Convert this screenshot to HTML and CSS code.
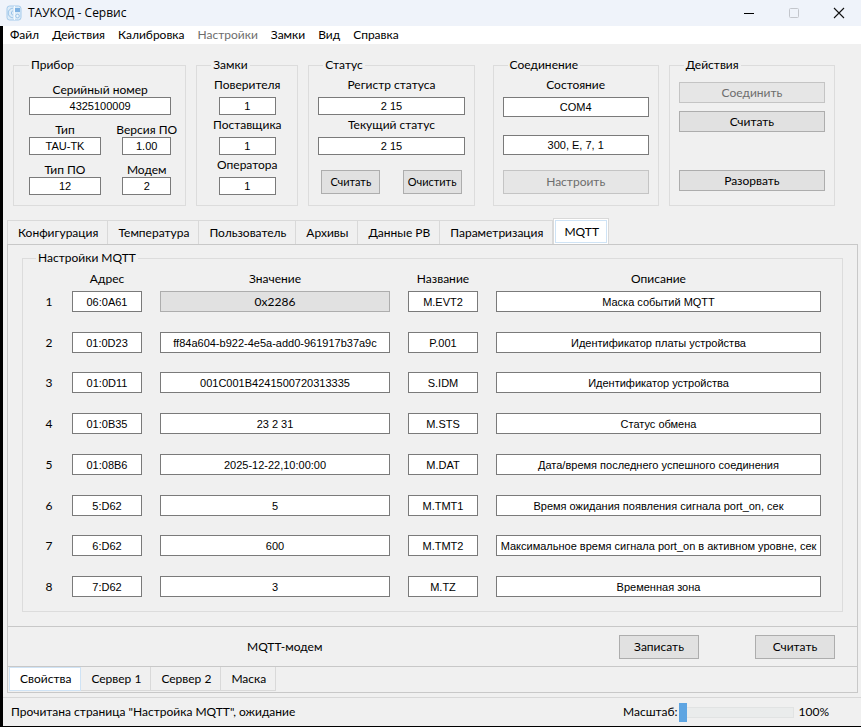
FILE: index.html
```html
<!DOCTYPE html>
<html lang="ru">
<head>
    <meta charset="UTF-8">
    <meta name="viewport" content="width=device-width, initial-scale=1.0">
    <title>ТАУКОД - Сервис</title>
    <link rel="stylesheet" href="styles.css">
</head>
<body>

<div class="window">
    <header class="titlebar">
        <svg class="app-icon" width="16" height="16" viewBox="0 0 16 16">
            <rect x="1" y="1" width="14" height="14" rx="2.5" fill="#dcebf8" stroke="#a6cbec"/>
            <path d="M7 3.2A4.8 4.8 0 0 0 7 12.8M7 5.8A2.3 2.3 0 0 0 7 10.2" fill="none" stroke="#9cc4e8"/>
            <path d="M8.5 1v14" stroke="#f4f9fd"/>
            <rect x="9" y="3" width="5" height="4" fill="#7fb2e2"/>
            <circle cx="11.5" cy="11" r="1.8" fill="#eef6fc" stroke="#9cc4e8"/>
        </svg>
        <span class="title">ТАУКОД - Сервис</span>
        <div class="window-buttons">
            <button aria-label="Свернуть"><svg width="12" height="12" viewBox="0 0 12 12"><path d="M1 6.5h10" stroke="#000"/></svg></button>
            <button aria-label="Развернуть" disabled><svg width="12" height="12" viewBox="0 0 12 12"><rect x="1.5" y="1.5" width="9" height="9" rx="1" fill="none" stroke="#c3c6cc"/></svg></button>
            <button aria-label="Закрыть"><svg width="12" height="12" viewBox="0 0 12 12"><path d="M1 1l10 10M11 1L1 11" stroke="#111" stroke-width="1.1"/></svg></button>
        </div>
    </header>

    <div class="client">
        <nav class="menu">
            <button>Файл</button>
            <button>Действия</button>
            <button>Калибровка</button>
            <button disabled>Настройки</button>
            <button>Замки</button>
            <button>Вид</button>
            <button>Справка</button>
        </nav>

        <section class="panels">
            <fieldset class="group device">
                <legend>Прибор</legend>
                <div class="field">
                    <label for="serial">Серийный номер</label>
                    <input id="serial" type="text" value="4325100009" readonly>
                </div>
                <div class="field-row">
                    <div class="field type">
                        <label for="type">Тип</label>
                        <input id="type" type="text" value="TAU-TK" readonly>
                    </div>
                    <div class="field short">
                        <label for="version">Версия ПО</label>
                        <input id="version" type="text" value="1.00" readonly>
                    </div>
                </div>
                <div class="field-row">
                    <div class="field type">
                        <label for="softType">Тип ПО</label>
                        <input id="softType" type="text" value="12" readonly>
                    </div>
                    <div class="field short">
                        <label for="modem">Модем</label>
                        <input id="modem" type="text" value="2" readonly>
                    </div>
                </div>
            </fieldset>

            <fieldset class="group locks">
                <legend>Замки</legend>
                <div class="field">
                    <label for="verifier">Поверителя</label>
                    <input id="verifier" type="text" value="1" readonly>
                </div>
                <div class="field">
                    <label for="supplier">Поставщика</label>
                    <input id="supplier" type="text" value="1" readonly>
                </div>
                <div class="field">
                    <label for="operator">Оператора</label>
                    <input id="operator" type="text" value="1" readonly>
                </div>
            </fieldset>

            <fieldset class="group status">
                <legend>Статус</legend>
                <div class="field">
                    <label for="statusReg">Регистр статуса</label>
                    <input id="statusReg" type="text" value="2 15" readonly>
                </div>
                <div class="field">
                    <label for="statusNow">Текущий статус</label>
                    <input id="statusNow" type="text" value="2 15" readonly>
                </div>
                <div class="button-row">
                    <button class="btn small">Считать</button>
                    <button class="btn small">Очистить</button>
                </div>
            </fieldset>

            <fieldset class="group connection">
                <legend>Соединение</legend>
                <div class="field">
                    <label for="port">Состояние</label>
                    <input id="port" type="text" value="COM4" readonly>
                </div>
                <input class="port-params" type="text" value="300, E, 7, 1" aria-label="Параметры порта" readonly>
                <button class="btn" disabled>Настроить</button>
            </fieldset>

            <fieldset class="group actions">
                <legend>Действия</legend>
                <button class="btn" disabled>Соединить</button>
                <button class="btn">Считать</button>
                <button class="btn disconnect">Разорвать</button>
            </fieldset>
        </section>

        <div class="tabs">
            <button class="tab">Конфигурация</button>
            <button class="tab">Температура</button>
            <button class="tab">Пользователь</button>
            <button class="tab">Архивы</button>
            <button class="tab">Данные РВ</button>
            <button class="tab">Параметризация</button>
            <button class="tab active">MQTT</button>
        </div>

        <main class="page">
            <fieldset class="group mqtt">
                <legend>Настройки MQTT</legend>
                <table class="params">
                    <colgroup>
                        <col class="col-num">
                        <col class="col-short">
                        <col class="col-value">
                        <col class="col-short">
                        <col>
                    </colgroup>
                    <thead>
                        <tr><th></th><th>Адрес</th><th>Значение</th><th>Название</th><th>Описание</th></tr>
                    </thead>
                    <tbody>
                        <tr>
                            <td>1</td>
                            <td><input type="text" value="06:0A61" aria-label="Адрес 1" readonly></td>
                            <td><button class="btn">0x2286</button></td>
                            <td><input type="text" value="M.EVT2" aria-label="Название 1" readonly></td>
                            <td><input type="text" value="Маска событий MQTT" aria-label="Описание 1" readonly></td>
                        </tr>
                        <tr>
                            <td>2</td>
                            <td><input type="text" value="01:0D23" aria-label="Адрес 2" readonly></td>
                            <td><input type="text" value="ff84a604-b922-4e5a-add0-961917b37a9c" aria-label="Значение 2"></td>
                            <td><input type="text" value="P.001" aria-label="Название 2" readonly></td>
                            <td><input type="text" value="Идентификатор платы устройства" aria-label="Описание 2" readonly></td>
                        </tr>
                        <tr>
                            <td>3</td>
                            <td><input type="text" value="01:0D11" aria-label="Адрес 3" readonly></td>
                            <td><input type="text" value="001C001B4241500720313335" aria-label="Значение 3"></td>
                            <td><input type="text" value="S.IDM" aria-label="Название 3" readonly></td>
                            <td><input type="text" value="Идентификатор устройства" aria-label="Описание 3" readonly></td>
                        </tr>
                        <tr>
                            <td>4</td>
                            <td><input type="text" value="01:0B35" aria-label="Адрес 4" readonly></td>
                            <td><input type="text" value="23 2 31" aria-label="Значение 4"></td>
                            <td><input type="text" value="M.STS" aria-label="Название 4" readonly></td>
                            <td><input type="text" value="Статус обмена" aria-label="Описание 4" readonly></td>
                        </tr>
                        <tr>
                            <td>5</td>
                            <td><input type="text" value="01:08B6" aria-label="Адрес 5" readonly></td>
                            <td><input type="text" value="2025-12-22,10:00:00" aria-label="Значение 5"></td>
                            <td><input type="text" value="M.DAT" aria-label="Название 5" readonly></td>
                            <td><input type="text" value="Дата/время последнего успешного соединения" aria-label="Описание 5" readonly></td>
                        </tr>
                        <tr>
                            <td>6</td>
                            <td><input type="text" value="5:D62" aria-label="Адрес 6" readonly></td>
                            <td><input type="text" value="5" aria-label="Значение 6"></td>
                            <td><input type="text" value="M.TMT1" aria-label="Название 6" readonly></td>
                            <td><input type="text" value="Время ожидания появления сигнала port_on, сек" aria-label="Описание 6" readonly></td>
                        </tr>
                        <tr>
                            <td>7</td>
                            <td><input type="text" value="6:D62" aria-label="Адрес 7" readonly></td>
                            <td><input type="text" value="600" aria-label="Значение 7"></td>
                            <td><input type="text" value="M.TMT2" aria-label="Название 7" readonly></td>
                            <td><input type="text" value="Максимальное время сигнала port_on в активном уровне, сек" aria-label="Описание 7" readonly></td>
                        </tr>
                        <tr>
                            <td>8</td>
                            <td><input type="text" value="7:D62" aria-label="Адрес 8" readonly></td>
                            <td><input type="text" value="3" aria-label="Значение 8"></td>
                            <td><input type="text" value="M.TZ" aria-label="Название 8" readonly></td>
                            <td><input type="text" value="Временная зона" aria-label="Описание 8" readonly></td>
                        </tr>
                    </tbody>
                </table>
            </fieldset>

            <div class="page-footer">
                <span class="page-name">MQTT-модем</span>
                <div class="page-buttons">
                    <button class="btn">Записать</button>
                    <button class="btn">Считать</button>
                </div>
            </div>

            <div class="subtabs">
                <button class="tab active">Свойства</button>
                <button class="tab">Сервер 1</button>
                <button class="tab">Сервер 2</button>
                <button class="tab">Маска</button>
            </div>
        </main>

        <footer class="statusbar">
            <span>Прочитана страница "Настройка MQTT", ожидание</span>
            <div class="scale">
                <label for="scale">Масштаб:</label>
                <input id="scale" type="range" min="100" max="200" value="100">
                <span>100%</span>
            </div>
        </footer>
    </div>
</div>

</body>
</html>
```
FILE: styles.css
```css
* {
    box-sizing: border-box;
}

body {
    margin: 0;
    background-color: #f0f0f0;
    font-family: Lato, "Noto Sans", sans-serif;
    font-size: 12px;
    line-height: 14px;
    color: #000;
}

button {
    margin: 0;
    padding: 0;
    border: none;
    background: none;
    font: inherit;
    color: inherit;
    white-space: nowrap;
}

.window {
    display: flex;
    flex-direction: column;
    min-height: 100vh;
}

/* title bar */
.titlebar {
    display: flex;
    align-items: center;
    height: 26px;
    padding-left: 6px;
    background-color: #eff3fa;
    font-family: "Open Sans", sans-serif;
    font-size: 12px;
}

.title {
    margin-left: 6px;
}

.window-buttons {
    display: flex;
    margin-left: auto;
}

.window-buttons button {
    display: flex;
    align-items: center;
    justify-content: center;
    width: 45px;
    height: 26px;
}

.client {
    flex: 1;
    display: flex;
    flex-direction: column;
    border-left: 3px solid #000;
    border-bottom: 1px solid #000;
}

.menu {
    display: flex;
    gap: 13px;
    height: 18px;
    padding: 0 7px;
    background-color: #fff;
}

.menu button:disabled {
    color: #6d6d6d;
}

/* text boxes and buttons */
input[type="text"] {
    display: block;
    width: 100%;
    height: 18px;
    margin: 0;
    padding: 0 2px;
    border: 1px solid #7a7a7a;
    border-radius: 0;
    background-color: #fff;
    font-family: "Liberation Sans", Arial, sans-serif;
    font-size: 11px;
    color: #000;
    text-align: center;
}

.btn {
    display: block;
    width: 100%;
    height: 24px;
    border: 1px solid #adadad;
    background-color: #e1e1e1;
}

.btn:disabled {
    border-color: #c4c4c4;
    background-color: #e6e6e6;
    color: #6d6d6d;
}

/* groups */
.panels {
    display: grid;
    grid-template-columns: 173fr 102fr 166fr 174fr 166fr;
    gap: 10px;
    padding: 13px 26px 12px 10px;
}

.group {
    min-width: 0;
    margin: 0;
    padding: 5px 9px 10px;
    border: 1px solid #dcdcdc;
}

.group legend {
    margin-left: 5px;
    padding: 0 2px;
    line-height: 16px;
}

.panels .group {
    height: 149px;
}

.panels .device {
    padding: 10px 14px 10px 15px;
}

.device legend {
    margin-left: 0;
}

.panels .connection {
    margin-left: 8px;
}

.field {
    display: flex;
    flex-direction: column;
    align-items: center;
    gap: 5px;
    margin-bottom: 3px;
}

.field label {
    white-space: nowrap;
}

.device .field {
    gap: 0;
    margin-bottom: 8px;
}

.field-row {
    display: flex;
    justify-content: space-between;
}

.type {
    width: 72px;
}

.short {
    width: 49px;
}

.locks .field input {
    width: 57px;
}

.button-row {
    display: flex;
    justify-content: space-between;
    margin-top: 15px;
    padding: 0 3px;
}

.btn.small {
    width: 59px;
    font-size: 11px;
}

.connection input[type="text"] {
    height: 20px;
}

.connection .port-params {
    margin: 18px 0 15px;
}

.connection .field {
    margin-bottom: 0;
}

.status .button-row {
    margin-top: 15px;
}

.panels .actions {
    padding-top: 9px;
}

.actions .btn {
    height: 21px;
    margin-bottom: 8px;
}

.actions .disconnect {
    margin-top: 38px;
}

/* tabs */
.tabs {
    display: flex;
    align-items: flex-end;
    padding-left: 4px;
}

.tab {
    height: 24px;
    padding: 0 9px 0 10px;
    border: 1px solid #d9d9d9;
    border-width: 1px 1px 0 0;
}

.tabs .tab:first-child {
    border-left-width: 1px;
}

.tabs .active {
    height: 26px;
    border-width: 1px 1px 0;
    background-color: #fff;
    box-shadow: inset 0 0 0 1px #fff, inset 0 0 0 2px #cfe3f5;
}

.page {
    flex: 1;
    display: flex;
    flex-direction: column;
    margin: 0 3px 4px 4px;
    border: 1px solid #c8c8c8;
}

.mqtt {
    margin: 5px 14px 14px;
    padding: 6px 12px 14px;
}

.mqtt legend {
    margin-left: 1px;
}

.params {
    width: 100%;
    table-layout: fixed;
    border-collapse: collapse;
}

.params th {
    height: 19px;
    padding: 0;
    font-weight: normal;
    vertical-align: top;
}

.params tbody tr {
    height: 41px;
}

.params tbody tr:nth-child(4n+2) {
    height: 40px;
}

.params tbody tr:last-child {
    height: 21px;
}

.params td {
    padding: 0 9px;
    line-height: 21px;
    text-align: center;
    vertical-align: top;
}

.params td:first-child {
    padding: 0;
}

.params input[type="text"],
.params .btn {
    height: 21px;
    line-height: 14px;
}

.col-num {
    width: 28px;
}

.col-short {
    width: 88px;
}

.col-value {
    width: 248px;
}

.page-footer {
    display: flex;
    align-items: center;
    justify-content: space-between;
    height: 41px;
    padding: 0 22px 0 239px;
    border: 1px solid #c8c8c8;
    border-width: 1px 0;
}

.page-buttons {
    display: flex;
    gap: 56px;
}

.page-buttons .btn {
    width: 80px;
}

.subtabs {
    display: flex;
    padding-left: 1px;
}

.subtabs .tab {
    border-width: 0 1px 1px 0;
}

.subtabs .active {
    border: 1px solid #cfe3f5;
    background-color: #fff;
}

/* status bar */
.statusbar {
    display: flex;
    align-items: center;
    justify-content: space-between;
    height: 29px;
    padding: 0 32px 0 8px;
    border-top: 1px solid #d7d7d7;
}

.scale {
    display: flex;
    align-items: center;
}

.scale input {
    appearance: none;
    width: 115px;
    height: 19px;
    margin: 0 5px 0 1px;
    background: none;
}

.scale input::-webkit-slider-runnable-track {
    height: 11px;
    border: 1px solid #e1e3e3;
    background-color: #eaecec;
}

.scale input::-webkit-slider-thumb {
    appearance: none;
    width: 8px;
    height: 19px;
    margin: -5px 0 0 -1px;
    background-color: #5ea5e2;
}
```
